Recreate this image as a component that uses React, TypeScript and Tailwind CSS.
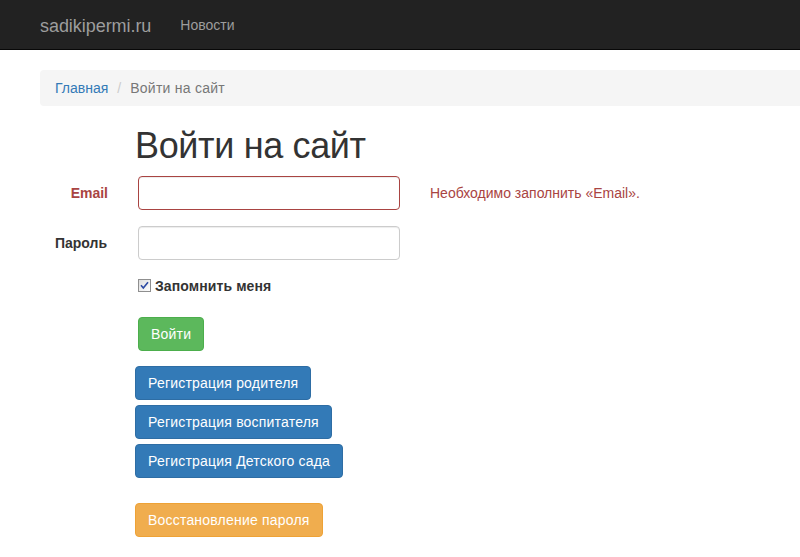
import React from "react";

export default function App() {
  const btn =
    "px-[12px] py-[6px] leading-[20px] text-[14px] tracking-[0.2px] text-white border rounded-[4px]";
  return (
    <div className="w-[800px] min-h-[557px] overflow-hidden bg-white font-['Liberation_Sans',Arial,sans-serif] text-[14px] leading-[20px] text-[#333]">
      <nav className="h-[50px] bg-[#222222] border-b border-[#080808] flex items-start pl-[25px]">
        <a className="block pl-[15px] pr-[14px] pt-[16px] pb-[14px] text-[18px] leading-[20px] tracking-[-0.05px] text-[#9d9d9d]">
          sadikipermi.ru
        </a>
        <a className="block px-[15px] py-[15px] text-[14px] leading-[20px] text-[#9d9d9d]">
          Новости
        </a>
      </nav>

      <div className="pl-[40px] mt-[20px]">
        <div className="w-[1000px] h-[36px] px-[15px] py-[8px] bg-[#f5f5f5] rounded-[4px] flex items-center">
          <a className="text-[#337ab7]">Главная</a>
          <span className="ml-[9px] text-[#cccccc]">/</span>
          <span className="ml-[9px] tracking-[0.25px] text-[#777777]">Войти на сайт</span>
        </div>
      </div>

      <h1 className="ml-[135px] mt-[20px] mb-[10px] text-[36px] leading-[39.6px] tracking-[-0.35px] font-normal text-[#333]">
        Войти на сайт
      </h1>

      <div className="flex items-start mb-[16px]">
        <label className="w-[108px] pt-[7px] text-right font-bold text-[#a94442]">Email</label>
        <input
          type="text"
          className="ml-[30px] w-[262px] h-[34px] px-[12px] border border-[#a94442] rounded-[4px] shadow-[inset_0_1px_1px_rgba(0,0,0,0.075)] outline-none"
        />
        <div className="ml-[30px] pt-[7px] text-[#a94442]">Необходимо заполнить «Email».</div>
      </div>

      <div className="flex items-start mb-[16px]">
        <label className="w-[107px] pt-[7px] text-right font-bold text-[#333]">Пароль</label>
        <input
          type="password"
          className="ml-[31px] w-[262px] h-[34px] px-[12px] border border-[#cccccc] rounded-[4px] shadow-[inset_0_1px_1px_rgba(0,0,0,0.075)] outline-none"
        />
      </div>

      <div className="flex items-center ml-[138px] mb-[21px] h-[20px]">
        <svg width="13" height="13" viewBox="0 0 13 13" className="shrink-0">
          <defs>
            <linearGradient id="cb" x1="0" y1="0" x2="1" y2="1">
              <stop offset="0" stopColor="#dcdcdc" />
              <stop offset="1" stopColor="#ffffff" />
            </linearGradient>
          </defs>
          <rect x="0.5" y="0.5" width="12" height="12" fill="url(#cb)" stroke="#8f8f8f" />
          <path d="M3 6.3 L5.3 9 L10 3.2" fill="none" stroke="#2c4aa3" strokeWidth="1.6" />
        </svg>
        <span className="ml-[4px] font-bold tracking-[0.1px] text-[#333]">Запомнить меня</span>
      </div>

      <div className="ml-[138px] mb-[15px]">
        <button className={`${btn} bg-[#5cb85c] border-[#4cae4c]`}>Войти</button>
      </div>

      <div className="ml-[135px] flex flex-col items-start gap-[5px]">
        <button className={`${btn} bg-[#337ab7] border-[#2e6da4]`}>Регистрация родителя</button>
        <button className={`${btn} bg-[#337ab7] border-[#2e6da4]`}>Регистрация воспитателя</button>
        <button className={`${btn} bg-[#337ab7] border-[#2e6da4]`}>Регистрация Детского сада</button>
      </div>

      <div className="ml-[135px] mt-[25px]">
        <button className={`${btn} bg-[#f0ad4e] border-[#eea236]`}>Восстановление пароля</button>
      </div>
    </div>
  );
}
